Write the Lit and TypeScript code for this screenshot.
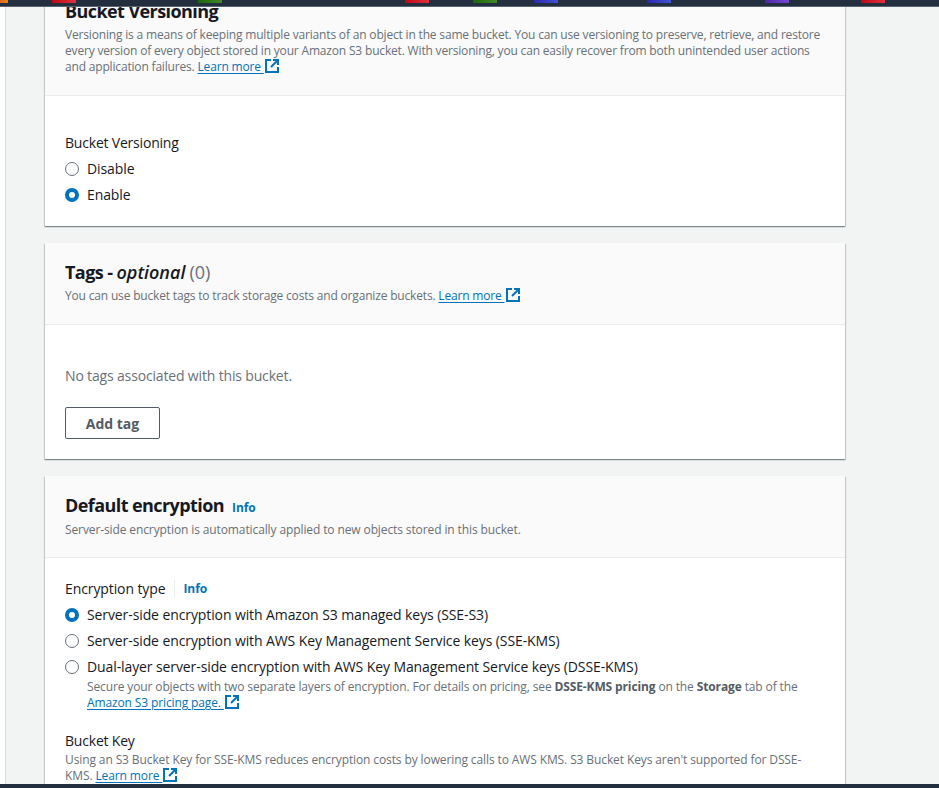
import { LitElement, html, css } from 'lit';
import { customElement } from 'lit/decorators.js';

// service icons of the favourites row, only their bottom edge shows above the fold
const RED = 'linear-gradient(90deg,#bd0816,#e0323a)';
const GREEN = 'linear-gradient(90deg,#1b660f,#438726)';
const BLUE = 'linear-gradient(90deg,#2e27ad,#4053d6)';
const PURPLE = 'linear-gradient(90deg,#4d27a8,#7746d3)';
const ORANGE = 'linear-gradient(90deg,#d9691a,#ec7f16)';

const STRIPES = [
  { w: 8, c: ORANGE }, { w: 44, c: '' }, { w: 24, c: RED }, { w: 122, c: '' },
  { w: 24, c: GREEN }, { w: 183, c: '' }, { w: 24, c: RED }, { w: 44, c: '' },
  { w: 24, c: GREEN }, { w: 37, c: '' }, { w: 24, c: BLUE }, { w: 89, c: '' },
  { w: 24, c: BLUE }, { w: 94, c: '' }, { w: 24, c: PURPLE }, { w: 72, c: '' },
  { w: 24, c: RED },
];

const external = html`<svg class="ext" viewBox="0 0 14 14" aria-hidden="true">
  <path d="M6 1H1v12h12V8" fill="none" stroke="currentColor" stroke-width="2"/>
  <path d="M8 1h5v5M12.5 1.5L6 8" fill="none" stroke="currentColor" stroke-width="2"/>
</svg>`;

@customElement('app-root')
export class AppRoot extends LitElement {
  static styles = css`
    :host {
      display: flex;
      flex-direction: column;
      height: 788px;
      overflow: hidden;
      font-family: 'Open Sans', 'Noto Sans', sans-serif;
      font-size: 14px;
      letter-spacing: -0.1px;
      color: #16191f;
      background: #f2f3f3;
    }
    .topbar {
      flex: none;
      height: 7px;
      display: flex;
      align-items: flex-start;
      background: #232f3e;
      border-bottom: 1px solid #5a6470;
      box-sizing: border-box;
    }
    .topbar span { height: 3px; flex: none; }
    .body {
      flex: 1;
      min-height: 0;
      display: flex;
      overflow: hidden;
    }
    .gutter {
      flex: none;
      width: 5px;
      background: #fff;
      border-right: 1px solid #d5dbdb;
    }
    .content {
      width: 800px;
      margin-left: 39px;
    }
    .stack {
      margin-top: -25px;
      display: flex;
      flex-direction: column;
      gap: 17px;
    }
    .card {
      background: #fff;
      box-shadow: 0 1px 1px 0 rgba(0, 28, 36, 0.3), 1px 1px 1px 0 rgba(0, 28, 36, 0.15), -1px 1px 1px 0 rgba(0, 28, 36, 0.15);
    }
    .head {
      background: #fafafa;
      border-bottom: 1px solid #eaeded;
      padding: 18px 20px 20px;
    }
    .head.short { padding-bottom: 19px; }
    .title {
      font-size: 18px;
      line-height: 22px;
      font-weight: 700;
      letter-spacing: -0.58px;
      color: #16191f;
    }
    .title em { font-weight: 600; letter-spacing: 0; }
    .count { font-weight: 400; letter-spacing: 0; color: #687078; }
    .info {
      font-size: 12px;
      line-height: 18px;
      font-weight: 700;
      letter-spacing: -0.1px;
      color: #0073bb;
      margin-left: 4px;
    }
    .desc {
      margin-top: 5px;
      font-size: 12px;
      line-height: 16px;
      letter-spacing: -0.175px;
      white-space: nowrap;
      color: #687078;
    }
    .desc.loose { letter-spacing: -0.11px; }
    a {
      color: #0073bb;
      text-decoration: underline;
      text-underline-offset: 2px;
    }
    .ext {
      width: 14px;
      height: 14px;
      color: #0073bb;
      vertical-align: -2px;
      margin-left: 1px;
    }
    .main { padding: 20px; }
    .label { line-height: 22px; letter-spacing: -0.2px; }
    .spaced { margin-top: 16px; }
    .radios {
      display: flex;
      flex-direction: column;
      gap: 4px;
      margin-top: 4px;
    }
    .radio {
      display: flex;
      gap: 8px;
      line-height: 22px;
    }
    .dot {
      flex: none;
      box-sizing: border-box;
      width: 14px;
      height: 14px;
      margin-top: 4px;
      border-radius: 50%;
      border: 1px solid #687078;
      background: #fff;
    }
    .dot.on { border: 4px solid #0073bb; }
    .sub {
      margin: 1px 0 0 22px;
      font-size: 12px;
      line-height: 16px;
      letter-spacing: -0.125px;
      white-space: nowrap;
      color: #687078;
    }
    .sub b { font-weight: 700; color: #545b64; }
    .empty { color: #687078; line-height: 22px; margin-top: 20px; letter-spacing: -0.16px; }
    .btn {
      display: block;
      width: 95px;
      height: 32px;
      box-sizing: border-box;
      margin-top: 20px;
      border: 1px solid #545b64;
      border-radius: 2px;
      background: #fff;
      color: #545b64;
      font: 700 14px 'Open Sans', 'Noto Sans', sans-serif;
    }
    .type { display: flex; align-items: center; line-height: 22px; }
    .type .info {
      margin-left: 9px;
      padding-left: 8px;
      border-left: 1px solid #eaeded;
    }
    .key { margin-top: 19px; }
    .key .desc { margin-top: 0; }
    .footer {
      flex: none;
      height: 4px;
      background: #232f3e;
    }
  `;

  render() {
    return html`
      <div class="topbar">
        ${STRIPES.map((s) => html`<span style="width:${s.w}px;background:${s.c || 'transparent'}"></span>`)}
      </div>
      <div class="body">
        <div class="gutter"></div>
        <div class="content">
          <div class="stack">
            <section class="card">
              <div class="head">
                <div class="title">Bucket Versioning</div>
                <div class="desc">
                  Versioning is a means of keeping multiple variants of an object in the same bucket. You can use versioning to preserve, retrieve, and restore<br>
                  every version of every object stored in your Amazon S3 bucket. With versioning, you can easily recover from both unintended user actions<br>
                  and application failures. <a href="#">Learn more </a>${external}
                </div>
              </div>
              <div class="main">
                <div class="label spaced">Bucket Versioning</div>
                <div class="radios">
                  <div class="radio"><span class="dot"></span>Disable</div>
                  <div class="radio"><span class="dot on"></span>Enable</div>
                </div>
              </div>
            </section>

            <section class="card">
              <div class="head">
                <div class="title">Tags - <em>optional</em> <span class="count">(0)</span></div>
                <div class="desc">
                  You can use bucket tags to track storage costs and organize buckets. <a href="#">Learn more </a>${external}
                </div>
              </div>
              <div class="main">
                <div class="empty">No tags associated with this bucket.</div>
                <button class="btn">Add tag</button>
              </div>
            </section>

            <section class="card">
              <div class="head short">
                <div class="title">Default encryption <span class="info">Info</span></div>
                <div class="desc loose">Server-side encryption is automatically applied to new objects stored in this bucket.</div>
              </div>
              <div class="main">
                <div class="type">Encryption type <span class="info">Info</span></div>
                <div class="radios">
                  <div class="radio"><span class="dot on"></span>Server-side encryption with Amazon S3 managed keys (SSE-S3)</div>
                  <div class="radio"><span class="dot"></span>Server-side encryption with AWS Key Management Service keys (SSE-KMS)</div>
                  <div class="radio"><span class="dot"></span>Dual-layer server-side encryption with AWS Key Management Service keys (DSSE-KMS)</div>
                </div>
                <p class="sub">
                  Secure your objects with two separate layers of encryption. For details on pricing, see <b>DSSE-KMS pricing</b> on the <b>Storage</b> tab of the<br>
                  <a href="#">Amazon S3 pricing page. </a>${external}
                </p>
                <div class="key">
                  <div class="label">Bucket Key</div>
                  <div class="desc loose">
                    Using an S3 Bucket Key for SSE-KMS reduces encryption costs by lowering calls to AWS KMS. S3 Bucket Keys aren't supported for DSSE-<br>
                    KMS. <a href="#">Learn more </a>${external}
                  </div>
                </div>
              </div>
            </section>
          </div>
        </div>
      </div>
      <div class="footer"></div>
    `;
  }
}
